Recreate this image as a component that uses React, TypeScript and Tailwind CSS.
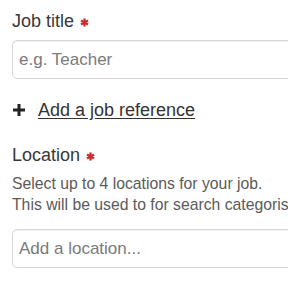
import React from 'react';

const Required: React.FC = () => (
  <svg className="inline-block ml-[6px] align-baseline" width="9" height="9" viewBox="0 0 10 10" aria-hidden="true">
    <g stroke="#c9302c" strokeWidth="2.6" strokeLinecap="butt">
      <line x1="5" y1="0.5" x2="5" y2="9.5" />
      <line x1="1.1" y1="2.75" x2="8.9" y2="7.25" />
      <line x1="1.1" y1="7.25" x2="8.9" y2="2.75" />
    </g>
  </svg>
);

const Field: React.FC<{ placeholder: string; className?: string }> = ({ placeholder, className }) => (
  <input
    type="text"
    placeholder={placeholder}
    className={`block w-[320px] h-[39px] px-[6px] border border-[#d6d6d6] rounded-[5px] bg-white text-[17px] text-[#333] placeholder:text-[#7a7a7a] shadow-[inset_0_1px_1px_rgba(0,0,0,0.06)] outline-none ${className ?? ''}`}
  />
);

export default function App() {
  return (
    <div
      className="w-[288px] h-[288px] overflow-hidden bg-white pl-[12px] pt-[10px]"
      style={{ fontFamily: '"Liberation Sans", Arial, sans-serif' }}
    >
      <label className="block text-[18px] leading-[22px] text-[#383838]">
        Job title
        <Required />
      </label>
      <Field placeholder="e.g. Teacher" className="mt-[8px]" />

      <button className="mt-[20px] flex items-center text-[18px] leading-[22px] text-[#333]">
        <svg width="12" height="12" viewBox="0 0 12 12" className="ml-[1px] mr-[13px] -mt-[1px]" aria-hidden="true">
          <path d="M6 0v12M0 6h12" stroke="#222" strokeWidth="3" />
        </svg>
        <span className="underline underline-offset-[2px]">Add a job reference</span>
      </button>

      <label className="block mt-[23px] text-[18px] leading-[22px] text-[#383838]">
        Location
        <Required />
      </label>
      <p className="mt-[7px] text-[15.75px] leading-[21px] text-[#5a5a5a] whitespace-nowrap">
        Select up to 4 locations for your job.
        <br />
        This will be used to for search categorisation.
      </p>
      <Field placeholder="Add a location..." className="mt-[14px]" />
    </div>
  );
}
